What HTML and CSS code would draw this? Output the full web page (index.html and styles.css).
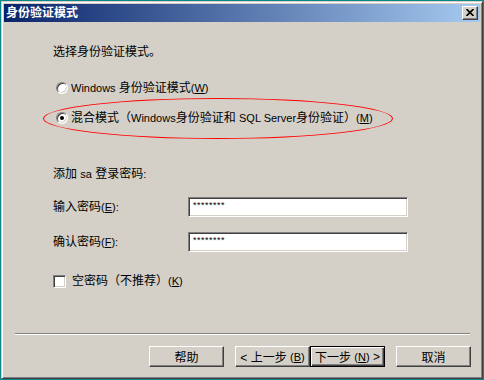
FILE: index.html
```html
<!DOCTYPE html>
<html lang="zh-CN">
<head>
  <meta charset="UTF-8">
  <title>身份验证模式</title>
  <link rel="stylesheet" href="styles.css">
</head>
<body>

  <div class="window">
    <div class="titlebar">
      <span class="title">身份验证模式</span>
      <span class="close">
        <svg width="8" height="7" viewBox="0 0 8 7">
          <path d="M0.5 0 L7.5 7 M7.5 0 L0.5 7" stroke="#000" stroke-width="1.6" fill="none"/>
        </svg>
      </span>
    </div>

    <div class="content">
      <div class="line">选择身份验证模式。</div>

      <div class="modes">
        <label class="option">
          <span class="radio"></span>
          <span><span class="en">Windows </span>身份验证模式<span class="en">(<u>W</u>)</span></span>
        </label>
        <label class="option selected">
          <span class="radio checked"></span>
          <span>混合模式（<span class="en">Windows</span>身份验证和 <span class="en">SQL Server</span>身份验证）<span class="en">(<u>M</u>)</span></span>
          <span class="ring"></span>
        </label>
      </div>

      <div class="line sa">添加 <span class="en">sa</span> 登录密码<span class="en">:</span></div>

      <div class="fields">
        <div class="line">输入密码<span class="en">(<u>E</u>):</span></div>
        <div class="input">********</div>
        <div class="line">确认密码<span class="en">(<u>F</u>):</span></div>
        <div class="input">********</div>
      </div>

      <label class="option blank">
        <span class="check"></span>
        <span>空密码（不推荐）<span class="en">(<u>K</u>)</span></span>
      </label>
    </div>

    <div class="footer">
      <div class="separator"></div>
      <div class="buttons">
        <span class="btn">帮助</span>
        <span class="btn gap">&lt; 上一步 <span class="en">(<u>B</u>)</span></span>
        <span class="btn default">下一步 <span class="en">(<u>N</u>)</span> &gt;</span>
        <span class="btn gap">取消</span>
      </div>
    </div>
  </div>

</body>
</html>
```

FILE: styles.css
```css
* {
  margin: 0;
  padding: 0;
  box-sizing: border-box;
}

body {
  background: #0b8787;
  width: 484px;
  height: 380px;
  overflow: hidden;
  font-family: 'Liberation Sans', 'Noto Sans CJK SC', sans-serif;
  font-size: 12px;
  color: #000;
}

.en {
  font-size: 11px;
}

.window {
  margin: 1px;
  width: 482px;
  height: 378px;
  background: #d4d0c8;
  border: 1px solid;
  border-color: #d4d0c8 #404040 #404040 #d4d0c8;
  box-shadow: inset 1px 1px #fff, inset -1px -1px #808080;
  padding: 2px;
  display: flex;
  flex-direction: column;
}

.titlebar {
  height: 18px;
  background: linear-gradient(to right, #0a246a, #a6caf0);
  display: flex;
  align-items: center;
  justify-content: space-between;
  padding: 0 2px 0 2px;
}

.title {
  color: #fff;
  font-weight: bold;
  font-size: 12px;
  line-height: 14px;
}

.close {
  width: 16px;
  height: 14px;
  background: #d4d0c8;
  border: 1px solid;
  border-color: #fff #404040 #404040 #fff;
  box-shadow: inset -1px -1px #808080;
  display: flex;
  align-items: center;
  justify-content: center;
  padding: 0 1px 1px 0;
}

.content {
  padding: 23px 0 0 49px;
  display: flex;
  flex-direction: column;
}

.line {
  height: 14px;
  line-height: 14px;
  white-space: nowrap;
}

.modes {
  margin-top: 22px;
  padding-left: 3px;
  display: flex;
  flex-direction: column;
  gap: 16px;
}

.option {
  position: relative;
  height: 14px;
  line-height: 14px;
  display: flex;
  align-items: center;
  gap: 3px;
  white-space: nowrap;
}

.radio {
  width: 12px;
  height: 12px;
  border-radius: 50%;
  background: #fff;
  border: 1px solid;
  border-color: #808080 #fff #fff #808080;
  box-shadow: inset 1px 1px #404040, inset -1px -1px #d4d0c8;
  display: flex;
  align-items: center;
  justify-content: center;
}

.radio.checked::after {
  content: '';
  width: 4px;
  height: 4px;
  border-radius: 50%;
  background: #000;
}

/* red annotation drawn over the second option */
.ring {
  position: absolute;
  left: -13px;
  top: -13px;
  width: 350px;
  height: 41px;
  border: 1px solid #f00;
  border-radius: 50%;
  pointer-events: none;
}

.sa {
  margin-top: 42px;
}

.fields {
  margin-top: 16px;
  display: grid;
  grid-template-columns: 135px 220px;
  grid-auto-rows: 20px;
  row-gap: 15px;
  align-items: center;
}

.input {
  height: 20px;
  background: #fff;
  border: 1px solid;
  border-color: #808080 #fff #fff #808080;
  box-shadow: inset 1px 1px #404040, inset -1px -1px #d4d0c8;
  font-size: 9px;
  line-height: 14px;
  padding-left: 4px;
  letter-spacing: 0.5px;
}

.blank {
  margin-top: 22px;
  gap: 6px;
}

.check {
  width: 13px;
  height: 13px;
  background: #fff;
  border: 1px solid;
  border-color: #808080 #fff #fff #808080;
  box-shadow: inset 1px 1px #404040, inset -1px -1px #d4d0c8;
}

.footer {
  margin-top: auto;
  padding-bottom: 9px;
}

.separator {
  margin: 0 10px 0 11px;
  border-top: 1px solid #808080;
  border-bottom: 1px solid #fff;
}

.buttons {
  margin-top: 11px;
  padding-right: 9px;
  display: flex;
  justify-content: flex-end;
}

.btn {
  width: 75px;
  height: 21px;
  border: 1px solid;
  border-color: #fff #404040 #404040 #fff;
  box-shadow: inset -1px -1px #808080;
  display: flex;
  align-items: center;
  justify-content: center;
  white-space: pre;
}

.btn.gap {
  margin-left: 11px;
}

.btn.default {
  border-color: #000;
  box-shadow: inset 1px 1px #fff, inset -1px -1px #404040, inset -2px -2px #808080;
}
```
